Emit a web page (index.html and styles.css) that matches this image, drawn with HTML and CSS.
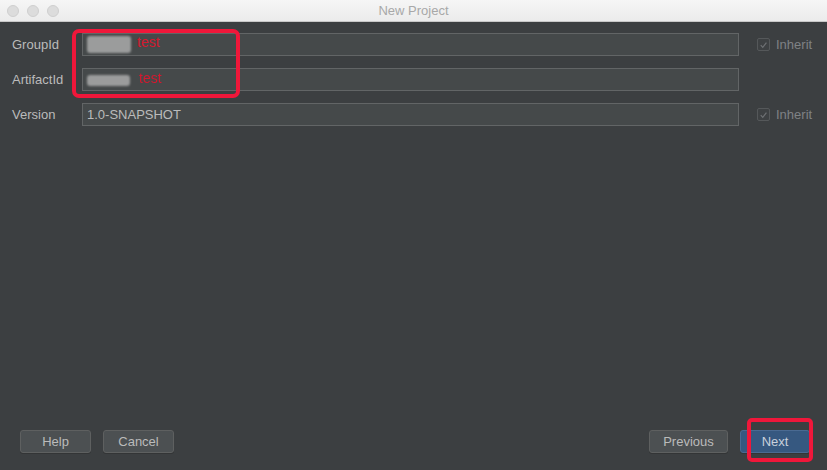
FILE: index.html
```html
<!DOCTYPE html>
<html>
<head>
<meta charset="utf-8">
<link rel="stylesheet" href="styles.css">
</head>
<body>
<div class="window">
  <div class="titlebar">
    <div class="lights"><span class="light"></span><span class="light"></span><span class="light"></span></div>
    <div class="title">New Project</div>
  </div>
  <div class="content">
    <div class="form">
      <label class="label">GroupId</label>
      <div class="field"><span class="blur blur-group"></span><span class="note">test</span></div>
      <div class="check"><span class="box"><svg viewBox="0 0 12 12" width="12" height="12"><path d="M3 6.2 L5.2 8.6 L9.2 3.4" fill="none" stroke="#6e7174" stroke-width="1.3"/></svg></span><span class="check-text">Inherit</span></div>

      <label class="label">ArtifactId</label>
      <div class="field"><span class="blur blur-artifact"></span><span class="note note2">test</span></div>
      <div class="check"></div>

      <label class="label">Version</label>
      <div class="field"><span class="value">1.0-SNAPSHOT</span></div>
      <div class="check"><span class="box"><svg viewBox="0 0 12 12" width="12" height="12"><path d="M3 6.2 L5.2 8.6 L9.2 3.4" fill="none" stroke="#6e7174" stroke-width="1.3"/></svg></span><span class="check-text">Inherit</span></div>
    </div>
  </div>
  <div class="footer">
    <div class="group">
      <button class="btn w71">Help</button>
      <button class="btn w71">Cancel</button>
    </div>
    <div class="group">
      <button class="btn w79">Previous</button>
      <button class="btn primary w70">Next</button>
    </div>
  </div>
  <div class="mark mark-fields"></div>
  <div class="mark mark-next"></div>
</div>
</body>
</html>
```
FILE: styles.css
```css
html, body {
  margin: 0;
  padding: 0;
}
body {
  width: 827px;
  height: 470px;
  overflow: hidden;
  font-family: "Liberation Sans", Arial, sans-serif;
  font-size: 13px;
  background: #3c3f41;
}
.window {
  position: relative;
  width: 827px;
  height: 470px;
  display: flex;
  flex-direction: column;
  background: #3c3f41;
}
.titlebar {
  height: 22px;
  flex: 0 0 22px;
  box-sizing: border-box;
  background: linear-gradient(#f6f6f6, #ebebeb);
  border-bottom: 1px solid #c8c8c8;
  display: flex;
  align-items: center;
  position: relative;
}
.lights {
  display: flex;
  gap: 8px;
  padding-left: 7px;
}
.light {
  width: 12px;
  height: 12px;
  border-radius: 50%;
  background: #dcdcdc;
  border: 0.5px solid #cfcfcf;
  box-sizing: border-box;
}
.title {
  position: absolute;
  left: 0;
  right: 0;
  top: 0;
  line-height: 22px;
  text-align: center;
  color: #a8a8a8;
  font-size: 13px;
}
.content {
  flex: 1;
  padding: 11px 0 0 12px;
}
.form {
  display: grid;
  grid-template-columns: 70px 657px 88px;
  row-gap: 12px;
  align-items: center;
}
.label {
  color: #bbbbbb;
  font-size: 13px;
}
.field {
  height: 23px;
  box-sizing: border-box;
  border: 1px solid #626566;
  background: #45494a;
  display: flex;
  align-items: center;
  padding-left: 4px;
  color: #bbbbbb;
  position: relative;
}
.value {
  font-size: 13px;
}
.blur {
  display: block;
  background: #9b9c9c;
  filter: blur(1px);
  border-radius: 3px;
}
.blur-group {
  width: 44px;
  height: 17px;
}
.blur-artifact {
  width: 43px;
  height: 11px;
  margin-top: 1px;
}
.note {
  color: #d4192f;
  font-size: 14px;
  margin-left: 6px;
  margin-top: -5px;
}
.note2 {
  margin-left: 9px;
  margin-top: -3px;
  filter: blur(0.4px);
}
.check {
  display: flex;
  align-items: center;
  padding-left: 18px;
  height: 23px;
}
.box {
  width: 13px;
  height: 13px;
  box-sizing: border-box;
  border: 1px solid #55585a;
  border-radius: 2px;
  background: #3e4143;
  display: flex;
  align-items: center;
  justify-content: center;
}
.check-text {
  margin-left: 6px;
  color: #7f8285;
  font-size: 13px;
}
.footer {
  display: flex;
  justify-content: space-between;
  padding: 0 17px 17px 20px;
}
.group {
  display: flex;
  gap: 12px;
}
.btn {
  height: 23px;
  box-sizing: border-box;
  border: 1px solid #5e6060;
  border-radius: 3px;
  background: #4c5052;
  color: #bbbbbb;
  font-family: "Liberation Sans", Arial, sans-serif;
  font-size: 13px;
  padding: 0;
  box-shadow: 0 1px 0 #333536;
}
.btn.primary {
  background: #365880;
  border-color: #4a6a92;
  color: #c8d0dc;
}
.w71 { width: 71px; }
.w79 { width: 79px; }
.w70 { width: 70px; }
.mark {
  position: absolute;
  border: 4px solid #f0173a;
  border-radius: 7px;
  box-sizing: border-box;
}
.mark-fields {
  left: 72px;
  top: 29px;
  width: 168px;
  height: 69px;
}
.mark-next {
  left: 747px;
  top: 418px;
  width: 66px;
  height: 44px;
  border-radius: 5px;
}
```
